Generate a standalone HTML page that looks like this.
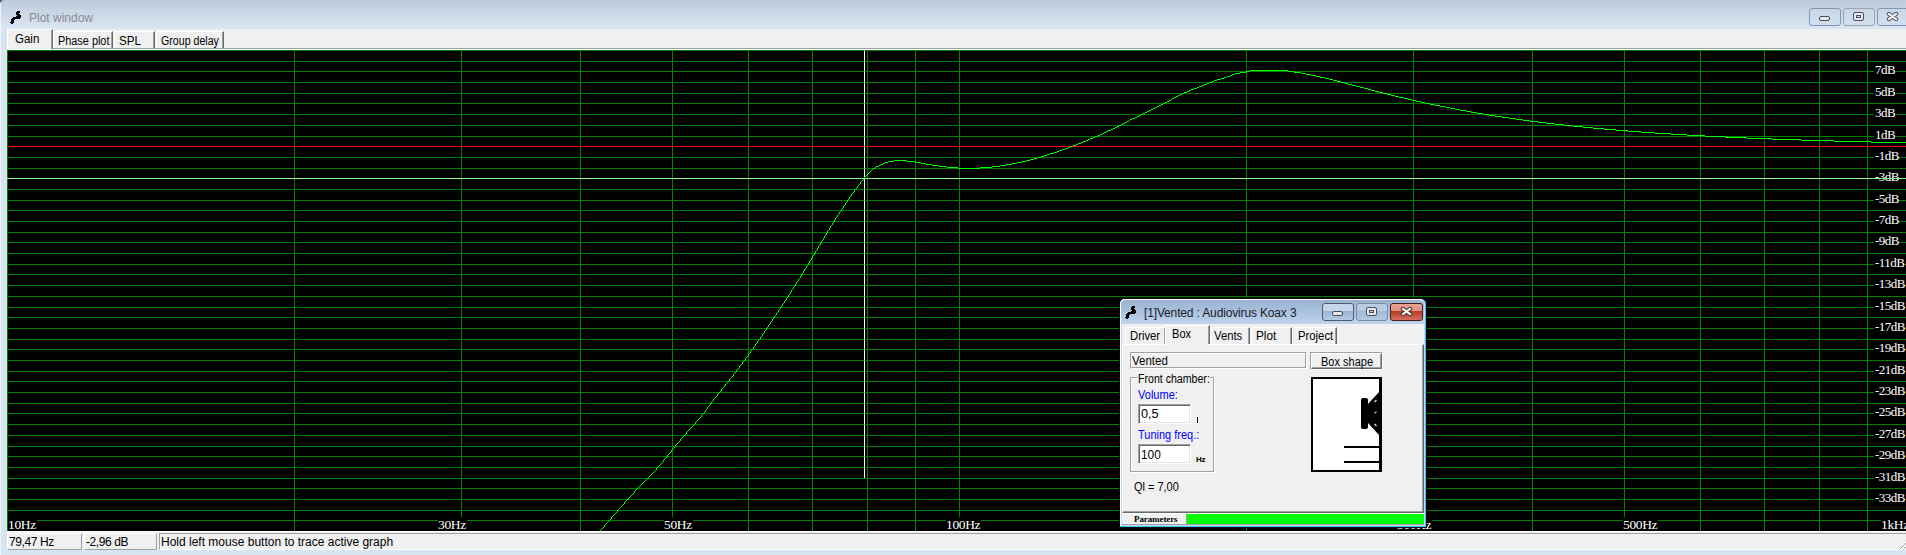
<!DOCTYPE html>
<html><head><meta charset="utf-8">
<style>
*{margin:0;padding:0;box-sizing:border-box}
html,body{width:1906px;height:555px;overflow:hidden;background:#d7e4f2;font-family:"Liberation Sans",sans-serif;}
.a{position:absolute}
.plot{position:absolute;left:0;top:0}
.t{position:absolute;white-space:nowrap;line-height:1;color:#000}
#title{left:0;top:0;width:1906px;height:29px;background:linear-gradient(#bccbdb,#dae6f3)}
#client{left:7px;top:29px;width:1899px;height:521px;background:#f0f0f0}
.wbtn{position:absolute;top:8px;height:18px;border:1px solid #8594b0;border-radius:3px;background:linear-gradient(#c8d6e6,#d2dfee)}
.tab{position:absolute;background:#f0f0f0;border-top:1px solid #fff;border-left:1px solid #fff;border-right:1px solid #696969;box-shadow:inset -1px 0 0 #a0a0a0;}
.tabtx{font-size:12px;letter-spacing:0;transform:scaleX(0.87);transform-origin:0 0}
.sp{position:absolute;top:533px;height:17px;background:#f0f0f0}

</style></head><body>
<div class="a" id="title"></div>
<div class="a" style="left:0;top:0;width:1px;height:555px;background:#eef3f9"></div>
<div class="a" style="left:0;top:0;width:3px;height:3px;background:radial-gradient(circle at 100% 100%, transparent 2px, #555 3px)"></div>
<svg class="a" style="left:0;top:0" width="40" height="30" shape-rendering="crispEdges"><g fill="#000"><rect x="17" y="11" width="3" height="1"/><rect x="16" y="12" width="4" height="1"/><rect x="16" y="13" width="3" height="1"/><rect x="16" y="14" width="4" height="1"/><rect x="17" y="15" width="4" height="1"/><rect x="16" y="16" width="5" height="1"/><rect x="13" y="17" width="8" height="1"/><rect x="12" y="18" width="8" height="1"/><rect x="11" y="19" width="4" height="1"/><rect x="11" y="20" width="3" height="1"/><rect x="11" y="21" width="3" height="1"/><rect x="10" y="22" width="4" height="1"/><rect x="11" y="23" width="2" height="1"/></g></svg>
<div class="t" style="left:29px;top:12px;font-size:12px;color:#8a8a93">Plot window</div>
<div class="wbtn" style="left:1809px;width:32px"></div>
<div class="wbtn" style="left:1843px;width:32px;border-color:#9aa3ad"></div>
<div class="wbtn" style="left:1877px;width:32px"></div>
<!-- min icon -->
<div class="a" style="left:1819px;top:16px;width:11px;height:5px;border:1px solid #4a4e5e;border-radius:2px;background:#e8e8e8"></div>
<div class="a" style="left:1853px;top:12px;width:11px;height:9px;border:1px solid #4a4e5e;border-radius:2px;background:#e8e8e8"></div>
<div class="a" style="left:1856px;top:15px;width:5px;height:3px;border:1px solid #4a4e5e;background:#cdd9e6"></div>
<svg class="a" style="left:1886px;top:11px" width="13" height="11" viewBox="0 0 13 11"><path d="M2.9 2.9 L10.1 8.1 M10.1 2.9 L2.9 8.1" stroke="#4a4e5e" stroke-width="4.2" stroke-linecap="round"/><path d="M2.9 2.9 L10.1 8.1 M10.1 2.9 L2.9 8.1" stroke="#f2f2f2" stroke-width="2.4" stroke-linecap="round"/></svg>

<div class="a" id="client"></div>
<!-- tabs -->
<div class="tab" style="left:53px;top:31px;width:60px;height:18px"></div>
<div class="tab" style="left:114px;top:31px;width:41px;height:18px"></div>
<div class="tab" style="left:156px;top:31px;width:68px;height:18px"></div>
<div class="a" style="left:53px;top:48px;width:1853px;height:1px;background:#a0a0a0"></div>
<div class="tab" style="left:7px;top:29px;width:46px;height:21px;border-bottom:none"></div>
<div class="a" style="left:7px;top:49px;width:1899px;height:1px;background:#fff"></div>
<div class="t tabtx" style="left:15px;top:33px;transform:scaleX(0.96)">Gain</div>
<div class="t tabtx" style="left:58px;top:35px;transform:scaleX(0.907)">Phase plot</div>
<div class="t tabtx" style="left:119px;top:35px;transform:scaleX(0.97)">SPL</div>
<div class="t tabtx" style="left:161px;top:35px;transform:scaleX(0.886)">Group delay</div>

<svg class="plot" width="1906" height="555" viewBox="0 0 1906 555" shape-rendering="crispEdges"><rect x="7" y="50" width="1899" height="481" fill="#000"/><rect x="7" y="50" width="1899" height="1" fill="#008000"/><rect x="7" y="61" width="1899" height="1" fill="#008000"/><rect x="7" y="71" width="1899" height="1" fill="#008000"/><rect x="7" y="82" width="1899" height="1" fill="#008000"/><rect x="7" y="93" width="1899" height="1" fill="#008000"/><rect x="7" y="103" width="1899" height="1" fill="#008000"/><rect x="7" y="114" width="1899" height="1" fill="#008000"/><rect x="7" y="125" width="1899" height="1" fill="#008000"/><rect x="7" y="136" width="1899" height="1" fill="#008000"/><rect x="7" y="157" width="1899" height="1" fill="#008000"/><rect x="7" y="168" width="1899" height="1" fill="#008000"/><rect x="7" y="178" width="1899" height="1" fill="#008000"/><rect x="7" y="189" width="1899" height="1" fill="#008000"/><rect x="7" y="200" width="1899" height="1" fill="#008000"/><rect x="7" y="210" width="1899" height="1" fill="#008000"/><rect x="7" y="221" width="1899" height="1" fill="#008000"/><rect x="7" y="232" width="1899" height="1" fill="#008000"/><rect x="7" y="242" width="1899" height="1" fill="#008000"/><rect x="7" y="253" width="1899" height="1" fill="#008000"/><rect x="7" y="264" width="1899" height="1" fill="#008000"/><rect x="7" y="274" width="1899" height="1" fill="#008000"/><rect x="7" y="285" width="1899" height="1" fill="#008000"/><rect x="7" y="296" width="1899" height="1" fill="#008000"/><rect x="7" y="307" width="1899" height="1" fill="#008000"/><rect x="7" y="317" width="1899" height="1" fill="#008000"/><rect x="7" y="328" width="1899" height="1" fill="#008000"/><rect x="7" y="339" width="1899" height="1" fill="#008000"/><rect x="7" y="349" width="1899" height="1" fill="#008000"/><rect x="7" y="360" width="1899" height="1" fill="#008000"/><rect x="7" y="371" width="1899" height="1" fill="#008000"/><rect x="7" y="381" width="1899" height="1" fill="#008000"/><rect x="7" y="392" width="1899" height="1" fill="#008000"/><rect x="7" y="403" width="1899" height="1" fill="#008000"/><rect x="7" y="413" width="1899" height="1" fill="#008000"/><rect x="7" y="424" width="1899" height="1" fill="#008000"/><rect x="7" y="435" width="1899" height="1" fill="#008000"/><rect x="7" y="446" width="1899" height="1" fill="#008000"/><rect x="7" y="456" width="1899" height="1" fill="#008000"/><rect x="7" y="467" width="1899" height="1" fill="#008000"/><rect x="7" y="478" width="1899" height="1" fill="#008000"/><rect x="7" y="488" width="1899" height="1" fill="#008000"/><rect x="7" y="499" width="1899" height="1" fill="#008000"/><rect x="7" y="510" width="1899" height="1" fill="#008000"/><rect x="7" y="520" width="1899" height="1" fill="#008000"/><rect x="7" y="50" width="1" height="481" fill="#008000"/><rect x="294" y="50" width="1" height="481" fill="#008000"/><rect x="461" y="50" width="1" height="481" fill="#008000"/><rect x="580" y="50" width="1" height="481" fill="#008000"/><rect x="672" y="50" width="1" height="481" fill="#008000"/><rect x="748" y="50" width="1" height="481" fill="#008000"/><rect x="812" y="50" width="1" height="481" fill="#008000"/><rect x="867" y="50" width="1" height="481" fill="#008000"/><rect x="915" y="50" width="1" height="481" fill="#008000"/><rect x="959" y="50" width="1" height="481" fill="#008000"/><rect x="1246" y="50" width="1" height="481" fill="#008000"/><rect x="1413" y="50" width="1" height="481" fill="#008000"/><rect x="1532" y="50" width="1" height="481" fill="#008000"/><rect x="1624" y="50" width="1" height="481" fill="#008000"/><rect x="1700" y="50" width="1" height="481" fill="#008000"/><rect x="1764" y="50" width="1" height="481" fill="#008000"/><rect x="1819" y="50" width="1" height="481" fill="#008000"/><rect x="1867" y="50" width="1" height="481" fill="#008000"/><rect x="1874" y="62" width="22" height="15" fill="#000"/><rect x="1874" y="84" width="22" height="15" fill="#000"/><rect x="1874" y="105" width="22" height="15" fill="#000"/><rect x="1874" y="127" width="22" height="15" fill="#000"/><rect x="1874" y="148" width="25" height="15" fill="#000"/><rect x="1874" y="169" width="25" height="15" fill="#000"/><rect x="1874" y="191" width="25" height="15" fill="#000"/><rect x="1874" y="212" width="25" height="15" fill="#000"/><rect x="1874" y="233" width="25" height="15" fill="#000"/><rect x="1874" y="255" width="31" height="15" fill="#000"/><rect x="1874" y="276" width="31" height="15" fill="#000"/><rect x="1874" y="298" width="31" height="15" fill="#000"/><rect x="1874" y="319" width="31" height="15" fill="#000"/><rect x="1874" y="340" width="31" height="15" fill="#000"/><rect x="1874" y="362" width="31" height="15" fill="#000"/><rect x="1874" y="383" width="31" height="15" fill="#000"/><rect x="1874" y="404" width="31" height="15" fill="#000"/><rect x="1874" y="426" width="31" height="15" fill="#000"/><rect x="1874" y="447" width="31" height="15" fill="#000"/><rect x="1874" y="469" width="31" height="15" fill="#000"/><rect x="1874" y="490" width="31" height="15" fill="#000"/><rect x="8" y="517" width="29" height="14" fill="#000"/><rect x="438" y="517" width="29" height="14" fill="#000"/><rect x="664" y="517" width="29" height="14" fill="#000"/><rect x="946" y="517" width="35" height="14" fill="#000"/><rect x="1397" y="517" width="35" height="14" fill="#000"/><rect x="1623" y="517" width="35" height="14" fill="#000"/><rect x="1881" y="517" width="25" height="14" fill="#000"/><rect x="8" y="146" width="1898" height="1" fill="#ff0000"/><g class="lbl" font-family="Liberation Serif, serif" font-size="13" letter-spacing="-0.5" fill="#fff"><text x="1875" y="74">7dB</text><text x="1875" y="96">5dB</text><text x="1875" y="117">3dB</text><text x="1875" y="139">1dB</text><text x="1875" y="160">-1dB</text><text x="1875" y="181">-3dB</text><text x="1875" y="203">-5dB</text><text x="1875" y="224">-7dB</text><text x="1875" y="245">-9dB</text><text x="1875" y="267">-11dB</text><text x="1875" y="288">-13dB</text><text x="1875" y="310">-15dB</text><text x="1875" y="331">-17dB</text><text x="1875" y="352">-19dB</text><text x="1875" y="374">-21dB</text><text x="1875" y="395">-23dB</text><text x="1875" y="416">-25dB</text><text x="1875" y="438">-27dB</text><text x="1875" y="459">-29dB</text><text x="1875" y="481">-31dB</text><text x="1875" y="502">-33dB</text><text x="8" y="529" font-size="13.5" letter-spacing="-0.35">10Hz</text><text x="438" y="529" font-size="13.5" letter-spacing="-0.35">30Hz</text><text x="664" y="529" font-size="13.5" letter-spacing="-0.35">50Hz</text><text x="946" y="529" font-size="13.5" letter-spacing="-0.35">100Hz</text><text x="1397" y="529" font-size="13.5" letter-spacing="-0.35">300Hz</text><text x="1623" y="529" font-size="13.5" letter-spacing="-0.35">500Hz</text><text x="1881" y="529" font-size="13.5" letter-spacing="-0.35">1kHz</text></g><rect x="7" y="178" width="1899" height="1" fill="#80ff80"/><rect x="7" y="178" width="1" height="1" fill="#ff80ff"/><rect x="294" y="178" width="1" height="1" fill="#ff80ff"/><rect x="461" y="178" width="1" height="1" fill="#ff80ff"/><rect x="580" y="178" width="1" height="1" fill="#ff80ff"/><rect x="672" y="178" width="1" height="1" fill="#ff80ff"/><rect x="748" y="178" width="1" height="1" fill="#ff80ff"/><rect x="812" y="178" width="1" height="1" fill="#ff80ff"/><rect x="867" y="178" width="1" height="1" fill="#ff80ff"/><rect x="915" y="178" width="1" height="1" fill="#ff80ff"/><rect x="959" y="178" width="1" height="1" fill="#ff80ff"/><rect x="1246" y="178" width="1" height="1" fill="#ff80ff"/><rect x="1413" y="178" width="1" height="1" fill="#ff80ff"/><rect x="1532" y="178" width="1" height="1" fill="#ff80ff"/><rect x="1624" y="178" width="1" height="1" fill="#ff80ff"/><rect x="1700" y="178" width="1" height="1" fill="#ff80ff"/><rect x="1764" y="178" width="1" height="1" fill="#ff80ff"/><rect x="1819" y="178" width="1" height="1" fill="#ff80ff"/><rect x="1867" y="178" width="1" height="1" fill="#ff80ff"/><rect x="864" y="50" width="1" height="428" fill="#fff"/><rect x="864" y="50" width="1" height="1" fill="#ff80ff"/><rect x="864" y="61" width="1" height="1" fill="#ff80ff"/><rect x="864" y="71" width="1" height="1" fill="#ff80ff"/><rect x="864" y="82" width="1" height="1" fill="#ff80ff"/><rect x="864" y="93" width="1" height="1" fill="#ff80ff"/><rect x="864" y="103" width="1" height="1" fill="#ff80ff"/><rect x="864" y="114" width="1" height="1" fill="#ff80ff"/><rect x="864" y="125" width="1" height="1" fill="#ff80ff"/><rect x="864" y="136" width="1" height="1" fill="#ff80ff"/><rect x="864" y="146" width="1" height="1" fill="#00ffff"/><rect x="864" y="157" width="1" height="1" fill="#ff80ff"/><rect x="864" y="168" width="1" height="1" fill="#ff80ff"/><rect x="864" y="178" width="1" height="1" fill="#ff80ff"/><rect x="864" y="189" width="1" height="1" fill="#ff80ff"/><rect x="864" y="200" width="1" height="1" fill="#ff80ff"/><rect x="864" y="210" width="1" height="1" fill="#ff80ff"/><rect x="864" y="221" width="1" height="1" fill="#ff80ff"/><rect x="864" y="232" width="1" height="1" fill="#ff80ff"/><rect x="864" y="242" width="1" height="1" fill="#ff80ff"/><rect x="864" y="253" width="1" height="1" fill="#ff80ff"/><rect x="864" y="264" width="1" height="1" fill="#ff80ff"/><rect x="864" y="274" width="1" height="1" fill="#ff80ff"/><rect x="864" y="285" width="1" height="1" fill="#ff80ff"/><rect x="864" y="296" width="1" height="1" fill="#ff80ff"/><rect x="864" y="307" width="1" height="1" fill="#ff80ff"/><rect x="864" y="317" width="1" height="1" fill="#ff80ff"/><rect x="864" y="328" width="1" height="1" fill="#ff80ff"/><rect x="864" y="339" width="1" height="1" fill="#ff80ff"/><rect x="864" y="349" width="1" height="1" fill="#ff80ff"/><rect x="864" y="360" width="1" height="1" fill="#ff80ff"/><rect x="864" y="371" width="1" height="1" fill="#ff80ff"/><rect x="864" y="381" width="1" height="1" fill="#ff80ff"/><rect x="864" y="392" width="1" height="1" fill="#ff80ff"/><rect x="864" y="403" width="1" height="1" fill="#ff80ff"/><rect x="864" y="413" width="1" height="1" fill="#ff80ff"/><rect x="864" y="424" width="1" height="1" fill="#ff80ff"/><rect x="864" y="435" width="1" height="1" fill="#ff80ff"/><rect x="864" y="446" width="1" height="1" fill="#ff80ff"/><rect x="864" y="456" width="1" height="1" fill="#ff80ff"/><rect x="864" y="467" width="1" height="1" fill="#ff80ff"/><g fill="#00ff00"><rect x="734" y="373" width="1" height="1"/><rect x="1246" y="71" width="4" height="1"/><rect x="1288" y="71" width="6" height="1"/><rect x="1250" y="70" width="38" height="1"/><rect x="603" y="527" width="1" height="1"/><rect x="1132" y="118" width="3" height="1"/><rect x="1509" y="118" width="7" height="1"/><rect x="1240" y="72" width="6" height="1"/><rect x="1294" y="72" width="7" height="1"/><rect x="639" y="486" width="1" height="1"/><rect x="1102" y="133" width="2" height="1"/><rect x="1655" y="133" width="16" height="1"/><rect x="1171" y="99" width="1" height="1"/><rect x="1408" y="99" width="4" height="1"/><rect x="729" y="379" width="1" height="1"/><rect x="782" y="305" width="1" height="1"/><rect x="1135" y="117" width="2" height="1"/><rect x="1502" y="117" width="7" height="1"/><rect x="1129" y="120" width="1" height="1"/><rect x="1523" y="120" width="7" height="1"/><rect x="879" y="165" width="2" height="1"/><rect x="932" y="165" width="7" height="1"/><rect x="1000" y="165" width="6" height="1"/><rect x="1149" y="110" width="2" height="1"/><rect x="1460" y="110" width="6" height="1"/><rect x="1095" y="136" width="3" height="1"/><rect x="1705" y="136" width="20" height="1"/><rect x="1041" y="156" width="3" height="1"/><rect x="1111" y="129" width="2" height="1"/><rect x="1604" y="129" width="12" height="1"/><rect x="873" y="168" width="2" height="1"/><rect x="958" y="168" width="22" height="1"/><rect x="777" y="312" width="1" height="1"/><rect x="695" y="422" width="1" height="1"/><rect x="1176" y="96" width="2" height="1"/><rect x="1395" y="96" width="4" height="1"/><rect x="1151" y="109" width="2" height="1"/><rect x="1455" y="109" width="5" height="1"/><rect x="1155" y="107" width="2" height="1"/><rect x="1445" y="107" width="5" height="1"/><rect x="1104" y="132" width="2" height="1"/><rect x="1641" y="132" width="14" height="1"/><rect x="1232" y="74" width="3" height="1"/><rect x="1306" y="74" width="5" height="1"/><rect x="1147" y="111" width="2" height="1"/><rect x="1466" y="111" width="5" height="1"/><rect x="690" y="428" width="1" height="1"/><rect x="1199" y="86" width="3" height="1"/><rect x="1356" y="86" width="4" height="1"/><rect x="706" y="409" width="1" height="1"/><rect x="671" y="451" width="1" height="1"/><rect x="1093" y="137" width="2" height="1"/><rect x="1725" y="137" width="22" height="1"/><rect x="894" y="160" width="13" height="1"/><rect x="1026" y="160" width="4" height="1"/><rect x="701" y="415" width="1" height="1"/><rect x="646" y="479" width="1" height="1"/><rect x="666" y="457" width="1" height="1"/><rect x="1167" y="101" width="2" height="1"/><rect x="1416" y="101" width="5" height="1"/><rect x="1143" y="113" width="2" height="1"/><rect x="1477" y="113" width="6" height="1"/><rect x="885" y="162" width="3" height="1"/><rect x="915" y="162" width="6" height="1"/><rect x="1017" y="162" width="5" height="1"/><rect x="717" y="395" width="1" height="1"/><rect x="1189" y="90" width="2" height="1"/><rect x="1371" y="90" width="4" height="1"/><rect x="682" y="437" width="1" height="1"/><rect x="1100" y="134" width="2" height="1"/><rect x="1671" y="134" width="16" height="1"/><rect x="1165" y="102" width="2" height="1"/><rect x="1421" y="102" width="4" height="1"/><rect x="883" y="163" width="2" height="1"/><rect x="921" y="163" width="5" height="1"/><rect x="1012" y="163" width="5" height="1"/><rect x="1081" y="142" width="2" height="1"/><rect x="1871" y="142" width="35" height="1"/><rect x="1090" y="138" width="3" height="1"/><rect x="1747" y="138" width="25" height="1"/><rect x="1184" y="92" width="3" height="1"/><rect x="1379" y="92" width="4" height="1"/><rect x="1217" y="79" width="4" height="1"/><rect x="1329" y="79" width="4" height="1"/><rect x="658" y="466" width="1" height="1"/><rect x="1212" y="81" width="2" height="1"/><rect x="1337" y="81" width="4" height="1"/><rect x="776" y="314" width="1" height="1"/><rect x="653" y="472" width="1" height="1"/><rect x="875" y="167" width="1" height="1"/><rect x="947" y="167" width="11" height="1"/><rect x="980" y="167" width="12" height="1"/><rect x="1159" y="105" width="2" height="1"/><rect x="1435" y="105" width="5" height="1"/><rect x="868" y="173" width="1" height="1"/><rect x="1230" y="75" width="2" height="1"/><rect x="1311" y="75" width="5" height="1"/><rect x="1157" y="106" width="2" height="1"/><rect x="1440" y="106" width="5" height="1"/><rect x="705" y="411" width="1" height="1"/><rect x="1194" y="88" width="3" height="1"/><rect x="1364" y="88" width="4" height="1"/><rect x="1187" y="91" width="2" height="1"/><rect x="1375" y="91" width="4" height="1"/><rect x="1083" y="141" width="3" height="1"/><rect x="1834" y="141" width="37" height="1"/><rect x="860" y="182" width="1" height="1"/><rect x="796" y="282" width="1" height="1"/><rect x="1209" y="82" width="3" height="1"/><rect x="1341" y="82" width="4" height="1"/><rect x="760" y="337" width="1" height="1"/><rect x="792" y="289" width="1" height="1"/><rect x="851" y="195" width="1" height="1"/><rect x="1123" y="123" width="2" height="1"/><rect x="1546" y="123" width="9" height="1"/><rect x="1062" y="149" width="3" height="1"/><rect x="1141" y="114" width="2" height="1"/><rect x="1483" y="114" width="6" height="1"/><rect x="1163" y="103" width="2" height="1"/><rect x="1425" y="103" width="5" height="1"/><rect x="1115" y="127" width="2" height="1"/><rect x="1583" y="127" width="10" height="1"/><rect x="1127" y="121" width="2" height="1"/><rect x="1530" y="121" width="8" height="1"/><rect x="751" y="350" width="1" height="1"/><rect x="1086" y="140" width="2" height="1"/><rect x="1801" y="140" width="33" height="1"/><rect x="602" y="528" width="1" height="1"/><rect x="795" y="284" width="1" height="1"/><rect x="854" y="190" width="1" height="1"/><rect x="1178" y="95" width="2" height="1"/><rect x="1391" y="95" width="4" height="1"/><rect x="835" y="218" width="1" height="1"/><rect x="791" y="291" width="1" height="1"/><rect x="739" y="366" width="1" height="1"/><rect x="1191" y="89" width="3" height="1"/><rect x="1368" y="89" width="3" height="1"/><rect x="628" y="498" width="1" height="1"/><rect x="625" y="501" width="1" height="1"/><rect x="1047" y="154" width="3" height="1"/><rect x="1145" y="112" width="2" height="1"/><rect x="1471" y="112" width="6" height="1"/><rect x="750" y="352" width="1" height="1"/><rect x="881" y="164" width="2" height="1"/><rect x="926" y="164" width="6" height="1"/><rect x="1006" y="164" width="6" height="1"/><rect x="782" y="304" width="1" height="1"/><rect x="620" y="507" width="1" height="1"/><rect x="640" y="485" width="1" height="1"/><rect x="676" y="444" width="1" height="1"/><rect x="1214" y="80" width="3" height="1"/><rect x="1333" y="80" width="4" height="1"/><rect x="1037" y="157" width="4" height="1"/><rect x="778" y="311" width="1" height="1"/><rect x="727" y="382" width="1" height="1"/><rect x="671" y="450" width="1" height="1"/><rect x="806" y="266" width="1" height="1"/><rect x="876" y="166" width="3" height="1"/><rect x="939" y="166" width="8" height="1"/><rect x="992" y="166" width="8" height="1"/><rect x="1098" y="135" width="2" height="1"/><rect x="1687" y="135" width="18" height="1"/><rect x="1121" y="124" width="2" height="1"/><rect x="1555" y="124" width="9" height="1"/><rect x="652" y="473" width="1" height="1"/><rect x="722" y="388" width="1" height="1"/><rect x="632" y="494" width="1" height="1"/><rect x="707" y="408" width="1" height="1"/><rect x="834" y="220" width="1" height="1"/><rect x="888" y="161" width="6" height="1"/><rect x="907" y="161" width="8" height="1"/><rect x="1022" y="161" width="4" height="1"/><rect x="738" y="368" width="1" height="1"/><rect x="1197" y="87" width="2" height="1"/><rect x="1360" y="87" width="4" height="1"/><rect x="1106" y="131" width="2" height="1"/><rect x="1628" y="131" width="13" height="1"/><rect x="830" y="227" width="1" height="1"/><rect x="809" y="261" width="1" height="1"/><rect x="710" y="404" width="1" height="1"/><rect x="675" y="446" width="1" height="1"/><rect x="1180" y="94" width="2" height="1"/><rect x="1387" y="94" width="4" height="1"/><rect x="705" y="410" width="1" height="1"/><rect x="670" y="452" width="1" height="1"/><rect x="805" y="268" width="1" height="1"/><rect x="1088" y="139" width="2" height="1"/><rect x="1772" y="139" width="29" height="1"/><rect x="1169" y="100" width="2" height="1"/><rect x="1412" y="100" width="4" height="1"/><rect x="686" y="432" width="1" height="1"/><rect x="833" y="222" width="1" height="1"/><rect x="801" y="275" width="1" height="1"/><rect x="829" y="229" width="1" height="1"/><rect x="861" y="181" width="1" height="1"/><rect x="1073" y="145" width="3" height="1"/><rect x="856" y="188" width="1" height="1"/><rect x="1174" y="97" width="2" height="1"/><rect x="1399" y="97" width="5" height="1"/><rect x="1204" y="84" width="3" height="1"/><rect x="1348" y="84" width="4" height="1"/><rect x="761" y="336" width="1" height="1"/><rect x="867" y="174" width="1" height="1"/><rect x="1119" y="125" width="2" height="1"/><rect x="1564" y="125" width="9" height="1"/><rect x="756" y="343" width="1" height="1"/><rect x="1161" y="104" width="2" height="1"/><rect x="1430" y="104" width="5" height="1"/><rect x="864" y="177" width="1" height="1"/><rect x="1108" y="130" width="3" height="1"/><rect x="1616" y="130" width="12" height="1"/><rect x="800" y="277" width="1" height="1"/><rect x="764" y="332" width="1" height="1"/><rect x="791" y="290" width="1" height="1"/><rect x="871" y="170" width="1" height="1"/><rect x="614" y="514" width="1" height="1"/><rect x="819" y="245" width="1" height="1"/><rect x="755" y="345" width="1" height="1"/><rect x="1125" y="122" width="2" height="1"/><rect x="1538" y="122" width="8" height="1"/><rect x="740" y="365" width="1" height="1"/><rect x="787" y="297" width="1" height="1"/><rect x="606" y="523" width="1" height="1"/><rect x="815" y="251" width="1" height="1"/><rect x="843" y="206" width="1" height="1"/><rect x="1130" y="119" width="2" height="1"/><rect x="1516" y="119" width="7" height="1"/><rect x="601" y="529" width="1" height="1"/><rect x="811" y="258" width="1" height="1"/><rect x="839" y="213" width="1" height="1"/><rect x="743" y="361" width="1" height="1"/><rect x="707" y="407" width="1" height="1"/><rect x="1182" y="93" width="2" height="1"/><rect x="1383" y="93" width="4" height="1"/><rect x="688" y="430" width="1" height="1"/><rect x="683" y="436" width="1" height="1"/><rect x="1224" y="77" width="3" height="1"/><rect x="1320" y="77" width="5" height="1"/><rect x="830" y="226" width="1" height="1"/><rect x="786" y="299" width="1" height="1"/><rect x="664" y="459" width="1" height="1"/><rect x="1078" y="143" width="3" height="1"/><rect x="1117" y="126" width="2" height="1"/><rect x="1573" y="126" width="10" height="1"/><rect x="814" y="254" width="1" height="1"/><rect x="680" y="439" width="1" height="1"/><rect x="700" y="417" width="1" height="1"/><rect x="710" y="403" width="1" height="1"/><rect x="675" y="445" width="1" height="1"/><rect x="695" y="423" width="1" height="1"/><rect x="1068" y="147" width="2" height="1"/><rect x="656" y="468" width="1" height="1"/><rect x="651" y="474" width="1" height="1"/><rect x="801" y="274" width="1" height="1"/><rect x="770" y="322" width="1" height="1"/><rect x="1221" y="78" width="3" height="1"/><rect x="1325" y="78" width="4" height="1"/><rect x="829" y="228" width="1" height="1"/><rect x="698" y="419" width="1" height="1"/><rect x="663" y="461" width="1" height="1"/><rect x="797" y="281" width="1" height="1"/><rect x="1202" y="85" width="2" height="1"/><rect x="1352" y="85" width="4" height="1"/><rect x="1070" y="146" width="3" height="1"/><rect x="766" y="329" width="1" height="1"/><rect x="825" y="235" width="1" height="1"/><rect x="674" y="447" width="1" height="1"/><rect x="1059" y="150" width="3" height="1"/><rect x="1139" y="115" width="2" height="1"/><rect x="1489" y="115" width="6" height="1"/><rect x="800" y="276" width="1" height="1"/><rect x="860" y="183" width="1" height="1"/><rect x="828" y="230" width="1" height="1"/><rect x="764" y="331" width="1" height="1"/><rect x="796" y="283" width="1" height="1"/><rect x="824" y="237" width="1" height="1"/><rect x="1207" y="83" width="2" height="1"/><rect x="1345" y="83" width="3" height="1"/><rect x="760" y="338" width="1" height="1"/><rect x="745" y="358" width="1" height="1"/><rect x="820" y="244" width="1" height="1"/><rect x="848" y="199" width="1" height="1"/><rect x="626" y="500" width="1" height="1"/><rect x="1050" y="153" width="4" height="1"/><rect x="1044" y="155" width="3" height="1"/><rect x="607" y="522" width="1" height="1"/><rect x="748" y="354" width="1" height="1"/><rect x="733" y="374" width="1" height="1"/><rect x="839" y="212" width="1" height="1"/><rect x="795" y="285" width="1" height="1"/><rect x="618" y="509" width="1" height="1"/><rect x="854" y="191" width="1" height="1"/><rect x="638" y="487" width="1" height="1"/><rect x="1034" y="158" width="3" height="1"/><rect x="1235" y="73" width="5" height="1"/><rect x="1301" y="73" width="5" height="1"/><rect x="613" y="515" width="1" height="1"/><rect x="633" y="493" width="1" height="1"/><rect x="835" y="219" width="1" height="1"/><rect x="744" y="360" width="1" height="1"/><rect x="739" y="367" width="1" height="1"/><rect x="814" y="253" width="1" height="1"/><rect x="847" y="201" width="1" height="1"/><rect x="645" y="480" width="1" height="1"/><rect x="716" y="396" width="1" height="1"/><rect x="810" y="260" width="1" height="1"/><rect x="711" y="402" width="1" height="1"/><rect x="838" y="214" width="1" height="1"/><rect x="657" y="467" width="1" height="1"/><rect x="806" y="267" width="1" height="1"/><rect x="775" y="315" width="1" height="1"/><rect x="687" y="431" width="1" height="1"/><rect x="1113" y="128" width="2" height="1"/><rect x="1593" y="128" width="11" height="1"/><rect x="834" y="221" width="1" height="1"/><rect x="1227" y="76" width="3" height="1"/><rect x="1316" y="76" width="4" height="1"/><rect x="668" y="454" width="1" height="1"/><rect x="663" y="460" width="1" height="1"/><rect x="699" y="418" width="1" height="1"/><rect x="766" y="328" width="1" height="1"/><rect x="809" y="262" width="1" height="1"/><rect x="694" y="424" width="1" height="1"/><rect x="1137" y="116" width="2" height="1"/><rect x="1495" y="116" width="7" height="1"/><rect x="691" y="427" width="1" height="1"/><rect x="865" y="176" width="1" height="1"/><rect x="686" y="433" width="1" height="1"/><rect x="1054" y="152" width="3" height="1"/><rect x="667" y="456" width="1" height="1"/><rect x="769" y="324" width="1" height="1"/><rect x="1172" y="98" width="2" height="1"/><rect x="1404" y="98" width="4" height="1"/><rect x="765" y="330" width="1" height="1"/><rect x="824" y="236" width="1" height="1"/><rect x="872" y="169" width="1" height="1"/><rect x="820" y="243" width="1" height="1"/><rect x="1057" y="151" width="2" height="1"/><rect x="864" y="178" width="1" height="1"/><rect x="816" y="250" width="1" height="1"/><rect x="849" y="198" width="1" height="1"/><rect x="844" y="205" width="1" height="1"/><rect x="859" y="184" width="1" height="1"/><rect x="749" y="353" width="1" height="1"/><rect x="619" y="508" width="1" height="1"/><rect x="1153" y="108" width="2" height="1"/><rect x="1450" y="108" width="5" height="1"/><rect x="847" y="200" width="1" height="1"/><rect x="721" y="389" width="1" height="1"/><rect x="681" y="438" width="1" height="1"/><rect x="815" y="252" width="1" height="1"/><rect x="784" y="301" width="1" height="1"/><rect x="843" y="207" width="1" height="1"/><rect x="811" y="259" width="1" height="1"/><rect x="780" y="308" width="1" height="1"/><rect x="637" y="488" width="1" height="1"/><rect x="1065" y="148" width="3" height="1"/><rect x="629" y="497" width="1" height="1"/><rect x="669" y="453" width="1" height="1"/><rect x="771" y="321" width="1" height="1"/><rect x="720" y="391" width="1" height="1"/><rect x="644" y="481" width="1" height="1"/><rect x="680" y="440" width="1" height="1"/><rect x="715" y="397" width="1" height="1"/><rect x="656" y="469" width="1" height="1"/><rect x="672" y="449" width="1" height="1"/><rect x="774" y="316" width="1" height="1"/><rect x="667" y="455" width="1" height="1"/><rect x="703" y="413" width="1" height="1"/><rect x="648" y="477" width="1" height="1"/><rect x="770" y="323" width="1" height="1"/><rect x="849" y="197" width="1" height="1"/><rect x="818" y="246" width="1" height="1"/><rect x="754" y="346" width="1" height="1"/><rect x="600" y="530" width="1" height="1"/><rect x="793" y="287" width="1" height="1"/><rect x="745" y="359" width="1" height="1"/><rect x="852" y="193" width="1" height="1"/><rect x="631" y="495" width="1" height="1"/><rect x="789" y="294" width="1" height="1"/><rect x="757" y="341" width="1" height="1"/><rect x="1076" y="144" width="2" height="1"/><rect x="753" y="348" width="1" height="1"/><rect x="643" y="482" width="1" height="1"/><rect x="748" y="355" width="1" height="1"/><rect x="733" y="375" width="1" height="1"/><rect x="780" y="307" width="1" height="1"/><rect x="728" y="381" width="1" height="1"/><rect x="725" y="384" width="1" height="1"/><rect x="610" y="519" width="1" height="1"/><rect x="650" y="475" width="1" height="1"/><rect x="788" y="296" width="1" height="1"/><rect x="736" y="370" width="1" height="1"/><rect x="731" y="377" width="1" height="1"/><rect x="697" y="420" width="1" height="1"/><rect x="779" y="309" width="1" height="1"/><rect x="692" y="426" width="1" height="1"/><rect x="708" y="406" width="1" height="1"/><rect x="673" y="448" width="1" height="1"/><rect x="684" y="435" width="1" height="1"/><rect x="831" y="225" width="1" height="1"/><rect x="719" y="392" width="1" height="1"/><rect x="679" y="441" width="1" height="1"/><rect x="660" y="464" width="1" height="1"/><rect x="827" y="232" width="1" height="1"/><rect x="823" y="239" width="1" height="1"/><rect x="1030" y="159" width="4" height="1"/><rect x="759" y="339" width="1" height="1"/><rect x="802" y="273" width="1" height="1"/><rect x="798" y="280" width="1" height="1"/><rect x="762" y="334" width="1" height="1"/><rect x="853" y="192" width="1" height="1"/><rect x="612" y="516" width="1" height="1"/><rect x="790" y="293" width="1" height="1"/><rect x="785" y="300" width="1" height="1"/><rect x="753" y="347" width="1" height="1"/><rect x="604" y="525" width="1" height="1"/><rect x="624" y="503" width="1" height="1"/><rect x="635" y="490" width="1" height="1"/><rect x="837" y="215" width="1" height="1"/><rect x="630" y="496" width="1" height="1"/><rect x="788" y="295" width="1" height="1"/><rect x="721" y="390" width="1" height="1"/><rect x="611" y="518" width="1" height="1"/><rect x="627" y="499" width="1" height="1"/><rect x="784" y="302" width="1" height="1"/><rect x="622" y="505" width="1" height="1"/><rect x="642" y="483" width="1" height="1"/><rect x="732" y="376" width="1" height="1"/><rect x="812" y="256" width="1" height="1"/><rect x="713" y="399" width="1" height="1"/><rect x="840" y="211" width="1" height="1"/><rect x="808" y="263" width="1" height="1"/><rect x="634" y="492" width="1" height="1"/><rect x="836" y="217" width="1" height="1"/><rect x="704" y="412" width="1" height="1"/><rect x="649" y="476" width="1" height="1"/><rect x="804" y="270" width="1" height="1"/><rect x="832" y="224" width="1" height="1"/><rect x="768" y="325" width="1" height="1"/><rect x="827" y="231" width="1" height="1"/><rect x="696" y="421" width="1" height="1"/><rect x="661" y="463" width="1" height="1"/><rect x="823" y="238" width="1" height="1"/><rect x="712" y="401" width="1" height="1"/><rect x="774" y="317" width="1" height="1"/><rect x="807" y="265" width="1" height="1"/><rect x="803" y="272" width="1" height="1"/><rect x="798" y="279" width="1" height="1"/><rect x="863" y="179" width="1" height="1"/><rect x="767" y="327" width="1" height="1"/><rect x="826" y="233" width="1" height="1"/><rect x="858" y="185" width="1" height="1"/><rect x="794" y="286" width="1" height="1"/><rect x="822" y="240" width="1" height="1"/><rect x="869" y="172" width="1" height="1"/><rect x="758" y="340" width="1" height="1"/><rect x="790" y="292" width="1" height="1"/><rect x="818" y="247" width="1" height="1"/><rect x="624" y="502" width="1" height="1"/><rect x="842" y="208" width="1" height="1"/><rect x="857" y="187" width="1" height="1"/><rect x="793" y="288" width="1" height="1"/><rect x="726" y="383" width="1" height="1"/><rect x="636" y="489" width="1" height="1"/><rect x="821" y="242" width="1" height="1"/><rect x="742" y="363" width="1" height="1"/><rect x="611" y="517" width="1" height="1"/><rect x="757" y="342" width="1" height="1"/><rect x="737" y="369" width="1" height="1"/><rect x="817" y="249" width="1" height="1"/><rect x="845" y="203" width="1" height="1"/><rect x="623" y="504" width="1" height="1"/><rect x="841" y="210" width="1" height="1"/><rect x="634" y="491" width="1" height="1"/><rect x="709" y="405" width="1" height="1"/><rect x="655" y="470" width="1" height="1"/><rect x="725" y="385" width="1" height="1"/><rect x="615" y="513" width="1" height="1"/><rect x="804" y="269" width="1" height="1"/><rect x="773" y="318" width="1" height="1"/><rect x="685" y="434" width="1" height="1"/><rect x="832" y="223" width="1" height="1"/><rect x="736" y="371" width="1" height="1"/><rect x="783" y="303" width="1" height="1"/><rect x="717" y="394" width="1" height="1"/><rect x="641" y="484" width="1" height="1"/><rect x="677" y="443" width="1" height="1"/><rect x="776" y="313" width="1" height="1"/><rect x="803" y="271" width="1" height="1"/><rect x="772" y="320" width="1" height="1"/><rect x="665" y="458" width="1" height="1"/><rect x="799" y="278" width="1" height="1"/><rect x="763" y="333" width="1" height="1"/><rect x="870" y="171" width="1" height="1"/><rect x="851" y="194" width="1" height="1"/><rect x="862" y="180" width="1" height="1"/><rect x="605" y="524" width="1" height="1"/><rect x="857" y="186" width="1" height="1"/><rect x="747" y="356" width="1" height="1"/><rect x="762" y="335" width="1" height="1"/><rect x="821" y="241" width="1" height="1"/><rect x="617" y="511" width="1" height="1"/><rect x="742" y="362" width="1" height="1"/><rect x="817" y="248" width="1" height="1"/><rect x="850" y="196" width="1" height="1"/><rect x="609" y="520" width="1" height="1"/><rect x="813" y="255" width="1" height="1"/><rect x="735" y="372" width="1" height="1"/><rect x="714" y="398" width="1" height="1"/><rect x="604" y="526" width="1" height="1"/><rect x="750" y="351" width="1" height="1"/><rect x="841" y="209" width="1" height="1"/><rect x="730" y="378" width="1" height="1"/><rect x="778" y="310" width="1" height="1"/><rect x="837" y="216" width="1" height="1"/><rect x="741" y="364" width="1" height="1"/><rect x="702" y="414" width="1" height="1"/><rect x="647" y="478" width="1" height="1"/><rect x="662" y="462" width="1" height="1"/><rect x="812" y="257" width="1" height="1"/><rect x="781" y="306" width="1" height="1"/><rect x="713" y="400" width="1" height="1"/><rect x="678" y="442" width="1" height="1"/><rect x="659" y="465" width="1" height="1"/><rect x="729" y="380" width="1" height="1"/><rect x="808" y="264" width="1" height="1"/><rect x="689" y="429" width="1" height="1"/><rect x="654" y="471" width="1" height="1"/><rect x="724" y="386" width="1" height="1"/><rect x="772" y="319" width="1" height="1"/><rect x="701" y="416" width="1" height="1"/><rect x="768" y="326" width="1" height="1"/><rect x="693" y="425" width="1" height="1"/><rect x="752" y="349" width="1" height="1"/><rect x="826" y="234" width="1" height="1"/><rect x="617" y="510" width="1" height="1"/><rect x="855" y="189" width="1" height="1"/><rect x="866" y="175" width="1" height="1"/><rect x="755" y="344" width="1" height="1"/><rect x="846" y="202" width="1" height="1"/><rect x="621" y="506" width="1" height="1"/><rect x="746" y="357" width="1" height="1"/><rect x="616" y="512" width="1" height="1"/><rect x="723" y="387" width="1" height="1"/><rect x="718" y="393" width="1" height="1"/><rect x="608" y="521" width="1" height="1"/><rect x="786" y="298" width="1" height="1"/><rect x="845" y="204" width="1" height="1"/></g></svg>

<!-- status bar -->
<div class="a" style="left:7px;top:531px;width:1899px;height:1px;background:#fff"></div>
<div class="sp" style="left:7px;width:75px;border-right:1px solid #a0a0a0;border-bottom:1px solid #a0a0a0;border-top:1px solid #fff;border-left:1px solid #fff"></div>
<div class="sp" style="left:84px;width:73px;border-right:1px solid #a0a0a0;border-bottom:1px solid #a0a0a0;border-top:1px solid #fff;border-left:1px solid #fff"></div>
<div class="sp" style="left:159px;width:1747px;border-left:1px solid #a0a0a0;border-top:1px solid #a0a0a0;border-bottom:1px solid #fff"></div>
<div class="t" style="left:9px;top:536px;font-size:12px;letter-spacing:-0.4px">79,47 Hz</div>
<div class="t" style="left:86px;top:536px;font-size:12px;letter-spacing:-0.4px">-2,96 dB</div>
<div class="t" style="left:161px;top:536px;font-size:12px">Hold left mouse button to trace active graph</div>
<svg class="a" style="left:1892px;top:536px" width="14" height="14"><path d="M7.5 13.5 L14.5 6.5 M11.5 13.5 L14.5 10.5" stroke="#a0a0a0" stroke-width="1"/><path d="M8.5 13.5 L14.5 7.5 M12.5 13.5 L14.5 11.5" stroke="#fff" stroke-width="1"/></svg>

<!-- dialog -->
<div class="dlg">
<div class="a" style="left:1119px;top:298px;width:308px;height:230px;border-radius:6px 6px 0 0;background:#0a0a0a"></div>
<div class="a" style="left:1120px;top:299px;width:306px;height:228px;border-radius:5px 5px 0 0;background:#40c8f4"></div>
<div class="a" style="left:1120px;top:299px;width:305px;height:227px;border-radius:5px 5px 0 0;background:#c8d6ee"></div>
<div class="a" style="left:1120px;top:299px;width:304px;height:226px;border-radius:5px 5px 0 0;border-top:1px solid #fff;border-left:1px solid #fff;background:linear-gradient(#98b2d0 0px,#aac3df 12px,#bdd2ea 23px,#c8d8ee 25px)"></div>
<svg class="a" style="left:1115px;top:300px" width="30" height="30" shape-rendering="crispEdges"><g fill="#000" transform="translate(-1115,-300)"><rect x="1132" y="306" width="3" height="1"/><rect x="1131" y="307" width="4" height="1"/><rect x="1131" y="308" width="3" height="1"/><rect x="1131" y="309" width="4" height="1"/><rect x="1132" y="310" width="4" height="1"/><rect x="1131" y="311" width="5" height="1"/><rect x="1128" y="312" width="8" height="1"/><rect x="1127" y="313" width="8" height="1"/><rect x="1126" y="314" width="4" height="1"/><rect x="1126" y="315" width="3" height="1"/><rect x="1126" y="316" width="3" height="1"/><rect x="1125" y="317" width="4" height="1"/><rect x="1126" y="318" width="2" height="1"/></g></svg>
<div class="t" style="left:1144px;top:307px;font-size:12px;letter-spacing:-0.15px;color:#1a1a2a">[1]Vented : Audiovirus Koax 3</div>
<div class="a" style="left:1322px;top:303px;width:32px;height:18px;border:1px solid #4d5a70;border-radius:3px;background:linear-gradient(#c5d6ea 0%,#c5d6ea 45%,#9ab4d2 46%,#b4cbe4 100%)"></div>
<div class="a" style="left:1356px;top:303px;width:32px;height:18px;border:1px solid #7d8da5;border-radius:3px;background:linear-gradient(#b8cde4 0%,#b8cde4 45%,#9fb8d5 46%,#b2c9e3 100%)"></div>
<div class="a" style="left:1390px;top:303px;width:33px;height:18px;border:1px solid #4a1a1a;border-radius:3px;background:linear-gradient(#e8a090 0%,#e09080 45%,#b83a20 46%,#d87060 100%)"></div>
<div class="a" style="left:1332px;top:311px;width:11px;height:5px;border:1px solid #4a4e5e;border-radius:2px;background:#e8e8e8"></div>
<div class="a" style="left:1366px;top:307px;width:11px;height:9px;border:1px solid #4a4e5e;border-radius:2px;background:#e8e8e8"></div>
<div class="a" style="left:1369px;top:310px;width:5px;height:3px;border:1px solid #4a4e5e;background:#b8cde4"></div>
<svg class="a" style="left:1400px;top:306px" width="13" height="11" viewBox="0 0 13 11"><path d="M2.9 2.9 L10.1 8.1 M10.1 2.9 L2.9 8.1" stroke="#3a2a2a" stroke-width="4.2" stroke-linecap="round"/><path d="M2.9 2.9 L10.1 8.1 M10.1 2.9 L2.9 8.1" stroke="#f2f2f2" stroke-width="2.4" stroke-linecap="round"/></svg>
<!-- client -->
<div class="a" style="left:1122px;top:324px;width:302px;height:201px;background:#f0f0f0"></div>
<!-- tabs -->
<div class="tab" style="left:1125px;top:327px;width:41px;height:18px"></div>
<div class="tab" style="left:1210px;top:327px;width:40px;height:18px"></div>
<div class="tab" style="left:1251px;top:327px;width:41px;height:18px"></div>
<div class="tab" style="left:1292px;top:327px;width:45px;height:18px"></div>
<div class="tab" style="left:1165px;top:325px;width:45px;height:20px"></div>
<!-- tab page -->
<div class="a" style="left:1122px;top:344px;width:302px;height:169px;border-top:1px solid #fff;border-left:1px solid #fff;border-right:1px solid #696969;border-bottom:1px solid #696969;box-shadow:inset -1px -1px 0 #a0a0a0"></div>
<div class="a" style="left:1166px;top:344px;width:42px;height:2px;background:#f0f0f0"></div>
<div class="t tabtx" style="left:1130px;top:330px;transform:scaleX(0.94)">Driver</div>
<div class="t tabtx" style="left:1172px;top:328px;transform:scaleX(0.924)">Box</div>
<div class="t tabtx" style="left:1214px;top:330px;transform:scaleX(0.94)">Vents</div>
<div class="t tabtx" style="left:1256px;top:330px;transform:scaleX(0.98)">Plot</div>
<div class="t tabtx" style="left:1298px;top:330px;transform:scaleX(0.942)">Project</div>
<!-- Vented edit -->
<div class="a" style="left:1130px;top:352px;width:177px;height:17px;border-top:1px solid #a0a0a0;border-left:1px solid #a0a0a0;border-right:1px solid #fff;border-bottom:1px solid #fff"></div>
<div class="a" style="left:1131px;top:353px;width:175px;height:15px;border-top:1px solid #fff;border-left:1px solid #fff;border-right:1px solid #a0a0a0;border-bottom:1px solid #a0a0a0"></div>
<div class="t tabtx" style="left:1132px;top:355px;transform:scaleX(0.96)">Vented</div>
<!-- Box shape button -->
<div class="a" style="left:1310px;top:352px;width:73px;height:18px;border-top:1px solid #a0a0a0;border-left:1px solid #a0a0a0;border-right:1px solid #fff;border-bottom:1px solid #fff"></div>
<div class="a" style="left:1311px;top:353px;width:71px;height:16px;border-top:1px solid #fff;border-left:1px solid #fff;border-right:1px solid #696969;border-bottom:1px solid #696969;box-shadow:inset -1px -1px 0 #a0a0a0"></div>
<div class="t tabtx" style="left:1321px;top:356px;transform:scaleX(0.917)">Box shape</div>
<!-- group box -->
<div class="a" style="left:1130px;top:377px;width:84px;height:95px;border:1px solid #a0a0a0;box-shadow:inset 1px 1px 0 #fff, 1px 1px 0 #fff"></div>
<div class="a" style="left:1138px;top:372px;width:72px;height:12px;background:#f0f0f0"></div>
<div class="t tabtx" style="left:1138px;top:373px;transform:scaleX(0.883)">Front chamber:</div>
<div class="t tabtx" style="left:1138px;top:389px;color:#0000ff;transform:scaleX(0.92)">Volume:</div>
<div class="a" style="left:1138px;top:404px;width:53px;height:20px;background:#fff;border-top:1px solid #a0a0a0;border-left:1px solid #a0a0a0;border-right:1px solid #fff;border-bottom:1px solid #fff;box-shadow:inset 1px 1px 0 #696969, inset -1px -1px 0 #e3e3e3"></div>
<div class="t tabtx" style="left:1141px;top:408px;transform:scaleX(1.06)">0,5</div>
<div class="a" style="left:1197px;top:417px;width:1px;height:6px;background:#000"></div>
<div class="t tabtx" style="left:1138px;top:429px;color:#0000ff;transform:scaleX(0.916)">Tuning freq.:</div>
<div class="a" style="left:1138px;top:444px;width:53px;height:20px;background:#fff;border-top:1px solid #a0a0a0;border-left:1px solid #a0a0a0;border-right:1px solid #fff;border-bottom:1px solid #fff;box-shadow:inset 1px 1px 0 #696969, inset -1px -1px 0 #e3e3e3"></div>
<div class="t tabtx" style="left:1141px;top:449px;transform:scaleX(0.986)">100</div>
<div class="t" style="left:1196px;top:456px;font-size:8px;font-weight:bold;letter-spacing:-0.3px">Hz</div>
<div class="t tabtx" style="left:1134px;top:481px;transform:scaleX(0.914)">Ql = 7,00</div>
<!-- box picture -->
<svg class="a" style="left:1300px;top:370px" width="100" height="110" shape-rendering="crispEdges">
<g transform="translate(-1300,-370)">
<rect x="1311" y="377" width="71" height="95" fill="#000"/>
<rect x="1313" y="379" width="66" height="91" fill="#fff"/>
<rect x="1344" y="446" width="36" height="2" fill="#000"/>
<rect x="1344" y="461" width="36" height="2" fill="#000"/>
<path d="M1361 400 Q1361 398 1363 398 L1366 398 Q1368 398 1368 400 L1368 404 L1379 392 L1379 435 L1368 423 L1368 427 Q1368 429 1366 429 L1363 429 Q1361 429 1361 427 Z" fill="#000" shape-rendering="geometricPrecision"/>
<path d="M1374.5 402 L1376.5 400 M1374.5 413 L1376.5 412 M1374.5 424 L1376.5 426" stroke="#ddd" stroke-width="1.3" shape-rendering="geometricPrecision"/>
</g></svg>
<!-- status -->
<div class="a" style="left:1122px;top:513px;width:65px;height:12px;border-top:1px solid #fff;border-right:1px solid #a0a0a0;border-bottom:1px solid #a0a0a0;background:#f0f0f0"></div>
<div class="t" style="left:1134px;top:515px;font-family:'Liberation Serif',serif;font-size:9px;font-weight:bold;letter-spacing:-0.1px">Parameters</div>
<div class="a" style="left:1187px;top:513px;width:237px;height:12px;border-top:1px solid #fff;border-bottom:1px solid #a0a0a0;background:#00ff00"></div>
</div>
</body></html>
